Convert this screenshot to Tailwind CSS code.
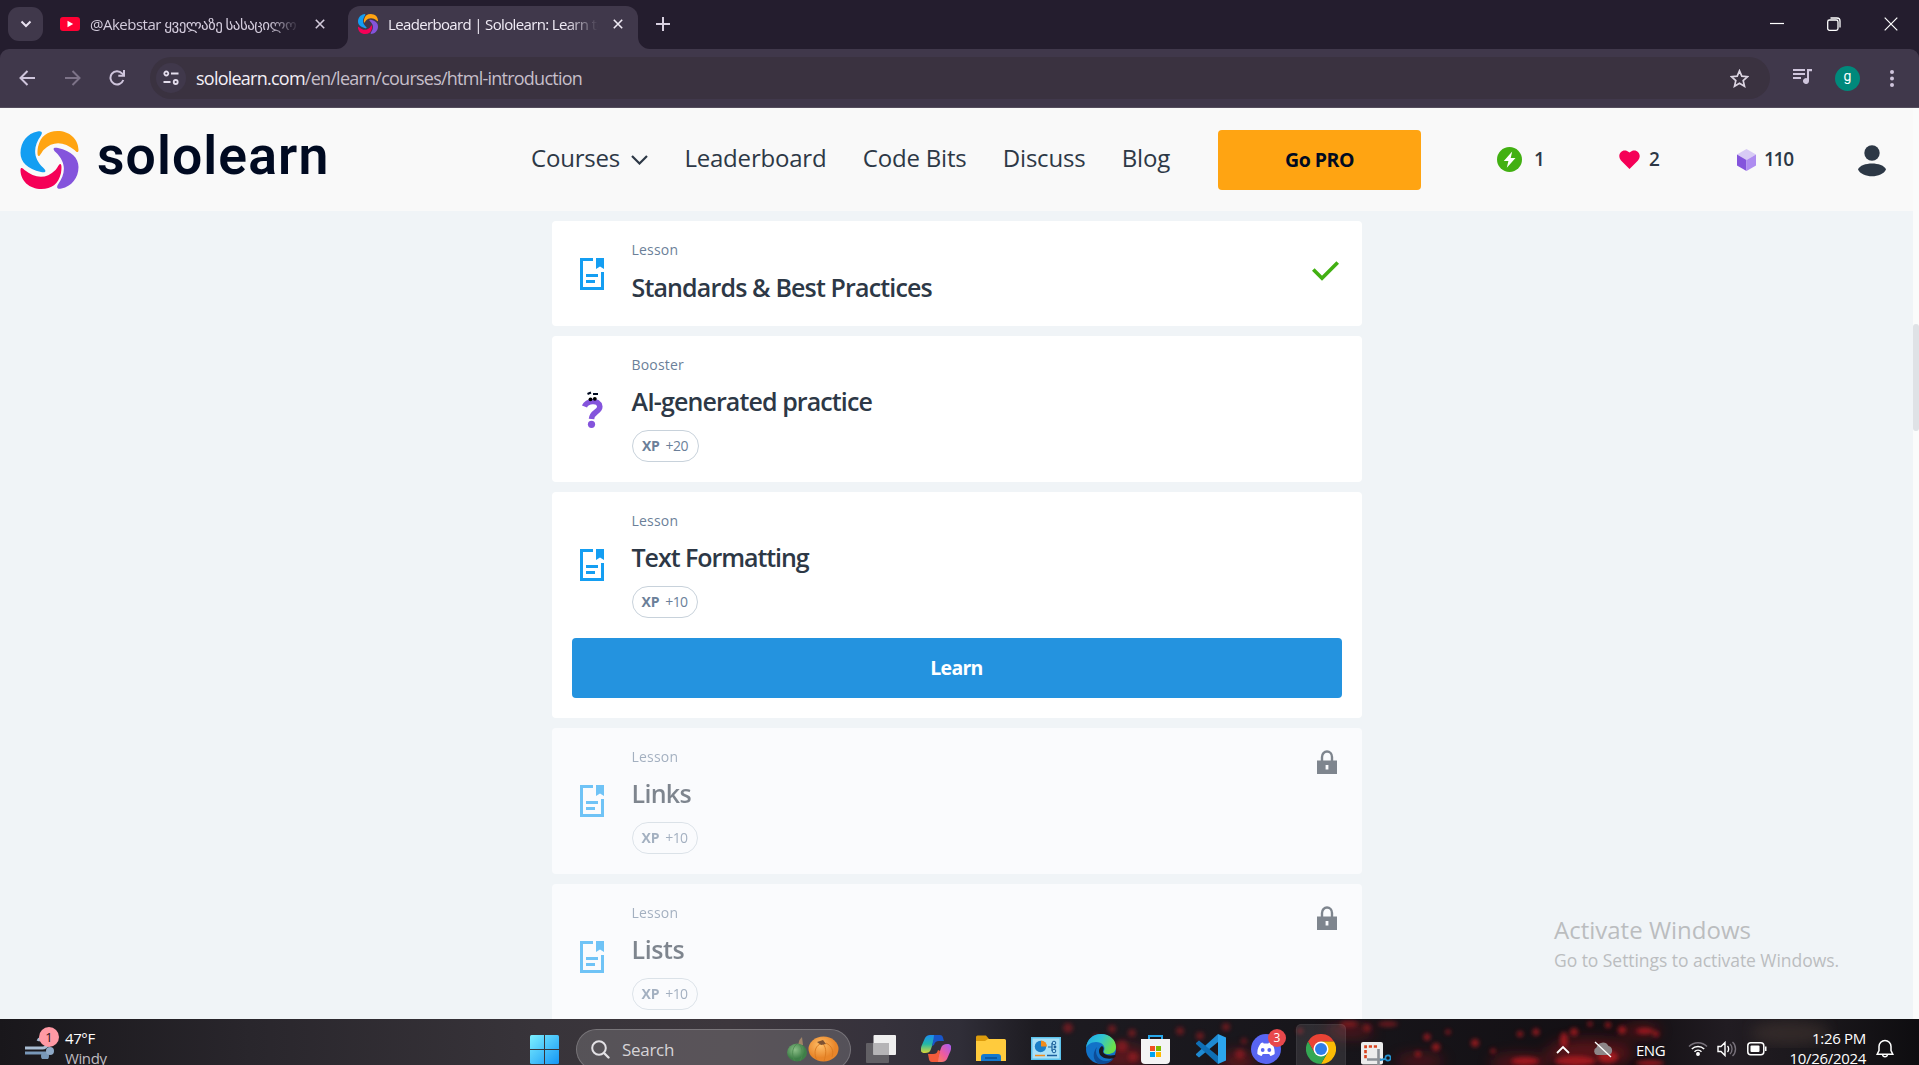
<!DOCTYPE html>
<html lang="en">
<head>
<meta charset="utf-8">
<title>Leaderboard | Sololearn: Learn to code</title>
<script src="https://cdn.jsdelivr.net/npm/@tailwindcss/browser@4"></script>
</head>
<body class="h-[1065px] w-[1919px] overflow-hidden bg-[#f0f4f7] font-['Open_Sans','DejaVu_Sans',sans-serif] text-[#2d3846]">
<!-- Shared symbols -->
<svg class="hidden">
  <symbol id="logo" viewBox="0 0 58 58">
    <path fill="#149ef2" d="M17 .6C21-.6 22.500 1.500 20.500 4.500C13 15 11.500 26 23 37C26.500 40.500 25 42 20.500 41C7 38 0 31 0 22C0 11 7 2.500 17 .6Z"/>
    <path fill="#ffa412" d="M18 25C16.500 24.500 17 19 17.500 16C20 5 27 0 37 0C49 0 58 8 58 19C58 22 56 21.500 54 19C44 11 33 9 23 19C20.500 22 19.500 25.500 18 25Z"/>
    <g transform="rotate(180 29 29)">
      <path fill="#8454dc" d="M17 .6C21-.6 22.500 1.500 20.500 4.500C13 15 11.500 26 23 37C26.500 40.500 25 42 20.500 41C7 38 0 31 0 22C0 11 7 2.500 17 .6Z"/>
      <path fill="#f50057" d="M18 25C16.500 24.500 17 19 17.500 16C20 5 27 0 37 0C49 0 58 8 58 19C58 22 56 21.500 54 19C44 11 33 9 23 19C20.500 22 19.500 25.500 18 25Z"/>
    </g>
  </symbol>
  <symbol id="lesson" viewBox="0 0 24 32">
    <path fill="none" stroke="#149ef2" stroke-width="3" d="M13 1.500H1.500V30.500H22.500V14"/>
    <path fill="#149ef2" d="M16 0h8v11l-4-2.500L16 11zM6 16h12v3H6zM6 22h9v3H6z"/>
  </symbol>
  <symbol id="lock" viewBox="0 0 20 25">
    <path fill="none" stroke="#2d3846" stroke-width="2.400" d="M5 11V7a5 5.500 0 0 1 10 0v4"/>
    <path fill="#2d3846" fill-rule="evenodd" d="M0 10.500h20V24H0zM8.600 15v4.500h2.800V15z"/>
  </symbol>
  <symbol id="close" viewBox="0 0 10 10"><path fill="none" stroke="currentColor" stroke-width="1.600" d="M.8.8l8.400 8.400M9.200.8L.8 9.200"/></symbol>
</svg>

<div class="flex h-full flex-col">
  <!-- Tab strip -->
  <div class="flex h-[49px] shrink-0 items-start bg-[#241d2e] text-[15px] text-[#d3cbdc]">
    <div class="mt-[7px] ml-2 flex h-[34px] w-[35px] items-center justify-center rounded-[11px] bg-[#40384b]">
      <svg class="h-2 w-3" viewBox="0 0 12 8"><path fill="none" stroke="#e9e2f0" stroke-width="2" d="M1.500 1.500L6 6l4.500-4.500"/></svg>
    </div>
    <div class="ml-[17px] flex h-[48px] w-[288px] items-center">
      <svg class="h-[14px] w-5" viewBox="0 0 20 14"><rect width="20" height="14" rx="3" fill="#ff0033"/><path fill="#fff" d="M7.500 3.800v6.400L13.200 7z"/></svg>
      <div class="ml-[10px] w-[210px] overflow-hidden whitespace-nowrap text-[15px] tracking-[-0.500px] [mask-image:linear-gradient(90deg,#000_85%,transparent)]">@Akebstar <span class="tracking-[-0.550px]">ყველაზე სასაცილო</span></div>
      <svg class="ml-[15px] size-[10px]"><use href="#close"/></svg>
    </div>
    <div class="relative mt-[6px] flex h-[43px] w-[290px] items-center rounded-t-[12px] bg-[#40384b] pb-[7px] text-[#f0ebf5]">
      <svg class="absolute bottom-0 -left-[12px] size-3" viewBox="0 0 12 12"><path fill="#40384b" d="M12 0v12H0A12 12 0 0 0 12 0z"/></svg>
      <svg class="absolute -right-[12px] bottom-0 size-3" viewBox="0 0 12 12"><path fill="#40384b" d="M0 0v12h12A12 12 0 0 1 0 0z"/></svg>
      <svg class="ml-[10px] size-5"><use href="#logo"/></svg>
      <div class="ml-[10px] w-[210px] overflow-hidden whitespace-nowrap text-[15px] tracking-[-0.650px] [mask-image:linear-gradient(90deg,#000_85%,transparent)]">Leaderboard | Sololearn: Learn to code</div>
      <svg class="ml-[15px] size-[10px]"><use href="#close"/></svg>
    </div>
    <svg class="mt-[17px] ml-[18px] size-[14px]" viewBox="0 0 14 14"><path stroke="#d8d0e0" stroke-width="2" d="M7 0v14M0 7h14"/></svg>
    <div class="mt-[17px] mr-[21px] ml-auto flex items-center gap-[43px] text-white">
      <svg class="h-[14px] w-[14px]" viewBox="0 0 14 14"><path stroke="#fff" stroke-width="1.200" d="M0 6.500h14"/></svg>
      <svg class="h-[14px] w-[14px]" viewBox="0 0 14 14"><path fill="none" stroke="#fff" stroke-width="1.300" d="M3.500 1h6.500a3 3 0 0 1 3 3v6.500"/><rect x=".7" y="3" width="10.300" height="10.300" rx="1.800" fill="none" stroke="#fff" stroke-width="1.300"/></svg>
      <svg class="h-[14px] w-[14px]" viewBox="0 0 14 14"><path stroke="#fff" stroke-width="1.200" d="M.7.7l12.600 12.600M13.300.7L.7 13.300"/></svg>
    </div>
  </div>

  <!-- Toolbar -->
  <div class="h-[59px] shrink-0 bg-[#241d2e]">
    <div class="flex h-full items-center rounded-t-[9px] border-b border-[#544d5d] bg-[#40384b] pl-5">
      <svg class="-ml-px size-4" viewBox="0 0 16 16"><path fill="none" stroke="#cfc5dc" stroke-width="2" d="M16 8H2M8.500 1L1.500 8l7 7"/></svg>
      <svg class="ml-[30px] size-4" viewBox="0 0 16 16"><path fill="none" stroke="#7d7388" stroke-width="2" d="M0 8h14M7.500 1l7 7-7 7"/></svg>
      <svg class="ml-[28px] size-4" viewBox="0 0 16 16"><path fill="none" stroke="#cfc5dc" stroke-width="2" d="M14.300 10A6.600 6.600 0 1 1 13 3.400l2 2"/><path fill="#cfc5dc" d="M16 0v6.700H9.300V4.800H14V0z"/></svg>
      <div class="ml-[25px] flex h-[42px] w-[1620px] items-center rounded-full bg-[#3a3240] pl-[6px]">
        <div class="flex size-[30px] items-center justify-center rounded-full bg-[#40384b]">
          <svg class="size-4" viewBox="0 0 16 16" fill="none" stroke="#e4dded" stroke-width="1.800"><circle cx="3.300" cy="3.500" r="2"/><path d="M8 3.500h7.500M.5 12h7"/><circle cx="12.700" cy="12" r="2"/></svg>
        </div>
        <div class="ml-[10px] text-[18px] tracking-[-0.760px] whitespace-nowrap text-[#c6bfca]"><span class="text-[#f3eff6]">sololearn.com</span>/en/learn/courses/html-introduction</div>
        <svg class="mr-[21px] ml-auto size-[19px]" viewBox="0 0 19 19"><path fill="none" stroke="#dcd5e2" stroke-width="1.700" d="M9.500 1.800l2.300 5.400 5.800.5-4.400 3.900 1.300 5.700-5-3-5 3 1.300-5.700L1.400 7.700l5.800-.5z"/></svg>
      </div>
      <svg class="mb-[3px] ml-[23px] h-[15px] w-[19px]" viewBox="0 0 19 15"><path fill="#cfc5dc" d="M0 0h12v2H0zM0 4h12v2H0zM0 8h8v2H0zM14 0h5v2.200h-3V12a3 3 0 1 1-2-2.800z"/></svg>
      <div class="ml-[23px] flex size-[25px] items-center justify-center rounded-full bg-[#00897b] pb-[3px] font-['Roboto',sans-serif] text-[14px] text-white">g</div>
      <svg class="ml-[30px] h-[17px] w-1" viewBox="0 0 4 17" fill="#cfc5dc"><circle cx="2" cy="2" r="2"/><circle cx="2" cy="8.500" r="2"/><circle cx="2" cy="15" r="2"/></svg>
    </div>
  </div>

  <!-- Page viewport -->
  <div class="flex min-h-0 grow">
    <div class="flex w-[1913px] flex-col">
      <header class="flex h-[103px] shrink-0 items-center bg-[#f9f9f9] pl-5">
        <svg class="h-[58px] w-[59px]"><use href="#logo"/></svg>
        <div class="-mt-[8px] ml-[18px] w-[232px] font-['Roboto',sans-serif] text-[53.500px] leading-[60px] font-semibold tracking-[1.100px] text-[#000a21]">sololearn</div>
        <nav class="-mt-[3px] ml-[202px] flex w-[639px] justify-between text-[24px] leading-8 tracking-[-0.200px] whitespace-nowrap">
          <div class="flex items-center">Courses<svg class="mt-1 ml-[11px] h-[10px] w-[17px]" viewBox="0 0 17 10"><path fill="none" stroke="#2d3846" stroke-width="2.200" d="M1 1l7.500 7.500L16 1"/></svg></div>
          <div>Leaderboard</div><div>Code Bits</div><div>Discuss</div><div>Blog</div>
        </nav>
        <div class="ml-[48px] flex h-[60px] w-[203px] items-center justify-center rounded bg-[#ffa412] text-[19.500px] font-bold tracking-[-0.500px] text-[#000a21]">Go PRO</div>
        <div class="flex items-center text-[19px] font-semibold">
          <svg class="ml-[76px] size-[25px]" viewBox="0 0 25 25"><circle cx="12.500" cy="12.500" r="12.500" fill="#42b012"/><path fill="#fff" d="M15.200 4.500L6.800 14h4.600l-1.600 6.800L18.500 11h-4.800z"/></svg>
          <span class="ml-3 w-[85px]">1</span>
          <svg class="h-[19px] w-[21px]" viewBox="0 0 21 19"><path fill="#f50057" d="M10.500 19L2 10.500C-3 4.500 4-3.500 10.500 2.500C17-3.500 24 4.500 19 10.500z"/></svg>
          <span class="ml-[9px] w-[88px]">2</span>
          <svg class="h-[22px] w-[19px]" viewBox="0 0 20 22" preserveAspectRatio="none"><path fill="#d8cbf5" d="M10 0l10 5.500L10 11 0 5.500z"/><path fill="#8454dc" d="M0 5.500L10 11v11L0 16.500z"/><path fill="#ae8cf0" d="M20 5.500L10 11v11l10-5.500z"/></svg>
          <span class="ml-[8px] w-[94px] tracking-[-1.300px]">110</span>
          <svg class="mt-[3px] h-8 w-7" viewBox="0 0 28 32"><ellipse cx="14" cy="8" rx="7.700" ry="7.700" fill="#2d3846"/><path fill="#2d3846" d="M0 24.500C3 16.500 25 16.500 28 24.500C24 33.500 4 33.500 0 24.500z"/></svg>
        </div>
      </header>

      <main class="mx-auto mt-[10px] flex min-h-0 w-[810px] grow flex-col gap-[10px] overflow-hidden [&>*]:shrink-0">
        <section class="flex h-[105px] rounded bg-white p-5">
          <svg class="mt-[17px] ml-2 h-8 w-6"><use href="#lesson"/></svg>
          <div class="ml-7">
            <div class="text-[14px] leading-[17px] tracking-[0.200px] text-[#6b7f99]">Lesson</div>
            <div class="mt-[12px] text-[25px] leading-[34px] font-semibold tracking-[-0.850px] whitespace-nowrap">Standards &amp; Best Practices</div>
          </div>
          <svg class="mt-5 mr-[3px] ml-auto h-5 w-[27px]" viewBox="0 0 27 20"><path fill="none" stroke="#42b012" stroke-width="3.700" d="M1.300 8.500L10 17.200 25.700 1.500"/></svg>
        </section>

        <section class="flex h-[146px] rounded bg-white p-5">
          <svg class="mt-[35px] ml-[10px] h-[37px] w-[22px]" viewBox="0 0 22 37"><path fill="none" stroke="#8454dc" stroke-width="5.500" d="M2.500 15.500C5 9.500 17 8.500 17.800 15.500C18 21 10 20.500 9.500 28"/><circle cx="9.500" cy="33.300" r="3.600" fill="#8454dc"/><path stroke="#000a21" stroke-width="2" d="M5.500 3l3.500-1.500M11 3h5"/><circle cx="8.500" cy="8.300" r="1.900"/><circle cx="12.800" cy="7.800" r="1.900"/></svg>
          <div class="ml-[28px]">
            <div class="text-[14px] leading-[17px] tracking-[0.200px] text-[#6b7f99]">Booster</div>
            <div class="mt-[12px] text-[25px] leading-[32px] font-semibold tracking-[-0.900px] whitespace-nowrap">AI-generated practice</div>
            <div class="mt-[13px] flex h-8 w-[67px] items-center justify-center gap-[6px] rounded-full border border-[#c8d2db] pb-[2px] text-[14px] tracking-[-0.500px] text-[#6b7f99]"><b class="tracking-[-0.200px]">XP</b><span>+20</span></div>
          </div>
        </section>

        <section class="h-[226px] rounded bg-white p-5">
          <div class="flex">
            <svg class="mt-[37px] ml-2 h-8 w-6"><use href="#lesson"/></svg>
            <div class="ml-7">
              <div class="text-[14px] leading-[17px] tracking-[0.200px] text-[#6b7f99]">Lesson</div>
              <div class="mt-[12px] text-[25px] leading-[32px] font-semibold tracking-[-1.050px] whitespace-nowrap">Text Formatting</div>
              <div class="mt-[13px] flex h-8 w-[66px] items-center justify-center gap-[6px] rounded-full border border-[#c8d2db] pb-[2px] text-[14px] tracking-[-0.600px] text-[#6b7f99]"><b class="tracking-[-0.200px]">XP</b><span>+10</span></div>
            </div>
          </div>
          <div class="mt-5 flex h-[60px] items-center justify-center rounded bg-[#2493df] text-[19.500px] font-bold tracking-[-0.700px] text-white">Learn</div>
        </section>

        <section class="flex h-[146px] rounded bg-[#fafbfd] p-5">
          <svg class="mt-[37px] ml-2 h-8 w-6 opacity-60"><use href="#lesson"/></svg>
          <div class="ml-7 opacity-60">
            <div class="text-[14px] leading-[17px] tracking-[0.200px] text-[#6b7f99]">Lesson</div>
            <div class="mt-[12px] text-[25px] leading-[32px] font-semibold tracking-[-0.700px] whitespace-nowrap">Links</div>
            <div class="mt-[13px] flex h-8 w-[66px] items-center justify-center gap-[6px] rounded-full border border-[#c8d2db] pb-[2px] text-[14px] tracking-[-0.600px] text-[#6b7f99]"><b class="tracking-[-0.200px]">XP</b><span>+10</span></div>
          </div>
          <svg class="mt-[2px] mr-[5px] ml-auto h-[25px] w-5 opacity-60"><use href="#lock"/></svg>
        </section>

        <section class="flex h-[146px] rounded bg-[#fafbfd] p-5">
          <svg class="mt-[37px] ml-2 h-8 w-6 opacity-60"><use href="#lesson"/></svg>
          <div class="ml-7 opacity-60">
            <div class="text-[14px] leading-[17px] tracking-[0.200px] text-[#6b7f99]">Lesson</div>
            <div class="mt-[12px] text-[25px] leading-[32px] font-semibold tracking-[-0.400px] whitespace-nowrap">Lists</div>
            <div class="mt-[13px] flex h-8 w-[66px] items-center justify-center gap-[6px] rounded-full border border-[#c8d2db] pb-[2px] text-[14px] tracking-[-0.600px] text-[#6b7f99]"><b class="tracking-[-0.200px]">XP</b><span>+10</span></div>
          </div>
          <svg class="mt-[2px] mr-[5px] ml-auto h-[25px] w-5 opacity-60"><use href="#lock"/></svg>
        </section>
      </main>
    </div>
    <!-- Scrollbar -->
    <div class="w-[6px] bg-[#fafbfb] pt-[216px]"><div class="h-[107px] rounded-[3px] bg-[#dfe2e6]"></div></div>
  </div>

  <!-- Taskbar -->
  <div class="relative flex h-[46px] shrink-0 items-start overflow-hidden bg-[linear-gradient(90deg,#19171b_0%,#29262c_13%,#38343a_28%,#3d373d_38%,#36323c_46%,#302e38_50%,#1d1b21_54%,#17151a_70%,#130f13_85%,#211c22_90%,#1a171b_95%,#0e0d10_100%)]">
    <!-- Wallpaper embers -->
    <svg class="absolute inset-0 h-full w-full" viewBox="0 0 1919 46">
      <defs><filter id="soft"><feGaussianBlur stdDeviation="2"/></filter><filter id="softer"><feGaussianBlur stdDeviation="7"/></filter></defs>
      <g filter="url(#softer)" fill="#8e131b" opacity=".55"><ellipse cx="1122" cy="38" rx="26" ry="12"/><ellipse cx="1238" cy="42" rx="18" ry="10"/><ellipse cx="1350" cy="12" rx="24" ry="6"/><ellipse cx="1420" cy="42" rx="24" ry="6"/><ellipse cx="1520" cy="44" rx="30" ry="8"/><ellipse cx="1590" cy="34" rx="44" ry="14"/><ellipse cx="1640" cy="12" rx="20" ry="6"/></g>
      <g filter="url(#soft)" fill="#b31a22" opacity=".5"><circle cx="1068" cy="9" r="5"/><circle cx="1112" cy="10" r="4"/><circle cx="1096" cy="18" r="3"/><circle cx="1132" cy="14" r="4"/><circle cx="1160" cy="26" r="4"/><circle cx="1122" cy="27" r="6"/><circle cx="1133" cy="38" r="5"/><circle cx="1180" cy="12" r="4"/><circle cx="1200" cy="17" r="4"/><circle cx="1226" cy="8" r="4"/><circle cx="1244" cy="22" r="3"/><circle cx="1240" cy="35" r="5"/><circle cx="1300" cy="12" r="3"/><ellipse cx="1349" cy="5" rx="9" ry="3.500"/><circle cx="1367" cy="9" r="4"/><ellipse cx="1388" cy="5" rx="10" ry="3"/></g>
      <g filter="url(#soft)" fill="#c21c24" opacity=".7"><circle cx="1427" cy="18" r="3.500"/><circle cx="1448" cy="13" r="2.500"/><circle cx="1436" cy="28" r="4"/><circle cx="1418" cy="35" r="3"/><circle cx="1475" cy="24" r="4"/><circle cx="1493" cy="32" r="2.500"/><circle cx="1520" cy="15" r="3"/><circle cx="1536" cy="13" r="3.500"/><ellipse cx="1564" cy="21" rx="4" ry="8"/><circle cx="1574" cy="13" r="4"/><circle cx="1590" cy="5" r="2.500"/><circle cx="1608" cy="6" r="3"/><circle cx="1622" cy="11" r="4"/><ellipse cx="1645" cy="12" rx="9" ry="3"/><circle cx="1656" cy="15" r="3"/><ellipse cx="1525" cy="42" rx="14" ry="4"/><ellipse cx="1575" cy="42" rx="20" ry="5"/><ellipse cx="1608" cy="38" rx="10" ry="6"/><ellipse cx="1650" cy="44" rx="14" ry="3"/></g>
      <ellipse cx="1790" cy="14" rx="40" ry="12" fill="#4a3b34" opacity=".5" filter="url(#softer)"/>
    </svg>
    <div class="relative flex w-full items-start text-white">
      <svg class="mt-[8px] ml-[25px] h-8 w-[34px]" viewBox="0 0 34 32"><path fill="none" stroke="#a9bdd3" stroke-width="3" d="M0 21h17a5 5 0 1 0-4-7"/><path fill="none" stroke="#7897b8" stroke-width="3" d="M0 26h22"/><circle cx="20" cy="29" r="4" fill="#7897b8"/><circle cx="25" cy="24" r="4" fill="#8fa9c6"/><circle cx="24" cy="10" r="10" fill="#ff99a4"/><text x="24" y="15" text-anchor="middle" font-size="13" font-family="Open Sans" fill="#2b1215">1</text></svg>
      <div class="mt-[9px] ml-[6px] w-[465px] text-[15px] leading-5 tracking-[-0.400px]"><div>47°F</div><div class="text-[#c0bdc1]">Windy</div></div>
      <svg class="mt-4 size-[29px]" viewBox="0 0 29 29"><defs><linearGradient id="win" x1="0" y1="0" x2="1" y2="1" gradientUnits="objectBoundingBox"><stop stop-color="#7df0ff"/><stop offset="1" stop-color="#1496f5"/></linearGradient><mask id="wm"><path fill="#fff" d="M0 0h14v14H0zM15 0h14v14H15zM0 15h14v14H0zM15 15h14v14H15z"/></mask></defs><rect width="29" height="29" rx="1.500" fill="url(#win)" mask="url(#wm)"/></svg>
      <div class="mt-[10px] ml-[17px] flex h-[41px] w-[275px] items-center rounded-full border border-white/20 bg-white/15 pl-[14px]">
        <svg class="mb-[1px] size-[19px]" viewBox="0 0 19 19"><circle cx="8" cy="8" r="6.800" fill="none" stroke="#e3e1e5" stroke-width="2"/><path stroke="#e3e1e5" stroke-width="2.400" stroke-linecap="round" d="M13 13l4.500 4.500"/></svg>
        <span class="ml-3 text-[17px] tracking-[-0.300px] text-[#d6d3d7]">Search</span>
        <svg class="mr-[11px] mb-px ml-auto h-[26px] w-[52px]" viewBox="0 0 52 26"><defs><radialGradient id="gp" cx=".4" cy=".35"><stop stop-color="#8cc088"/><stop offset="1" stop-color="#3f7f48"/></radialGradient><radialGradient id="op" cx=".4" cy=".35"><stop stop-color="#ffc06a"/><stop offset="1" stop-color="#e8862a"/></radialGradient></defs><path fill="#a08468" d="M11 9l1.500-5L15 1l1 8z"/><ellipse cx="10" cy="16.500" rx="10" ry="9" fill="url(#gp)"/><path fill="none" stroke="#4c8a50" stroke-width=".8" d="M10 8C4 12 5 21 8 25M12 8c4 4 4 12 1 17"/><ellipse cx="36.500" cy="13" rx="15" ry="12.500" fill="url(#op)"/><path fill="none" stroke="#d9791f" stroke-width=".9" d="M33 8c-6 3-6 11-3 16M36 8c4 4 3 11 1 17M39 7c6 3 8 8 6 14"/><path fill="#7d5232" d="M30 6l6-2 3 4-5 1z"/></svg>
      </div>
      <div class="mt-[15px] ml-[15px] flex items-start gap-[25px]">
        <svg class="mt-[1px] h-7 w-[30px]" viewBox="0 0 30 28"><rect y="8" width="23" height="20" rx="1" fill="#626065"/><rect x="7.500" width="22.500" height="20" rx="1" fill="#efefef"/><path fill="#b5b4b6" d="M7.500 8H23v12H7.500z"/></svg>
        <svg class="mt-[1px] h-[27px] w-[30px]" viewBox="0 0 30 27"><defs><linearGradient id="cpa" x1="0" y1="0" x2="0" y2="1"><stop stop-color="#1d8df2"/><stop offset=".5" stop-color="#22b7a6"/><stop offset="1" stop-color="#d8d837"/></linearGradient><linearGradient id="cpb" x1="1" y1="0" x2="0" y2="1"><stop stop-color="#a35cf5"/><stop offset=".5" stop-color="#ed5ba0"/><stop offset="1" stop-color="#ff8a45"/></linearGradient></defs><path fill="url(#cpa)" d="M9 0h8c-3 1-4 4-5 8l-2 6c-1 3-3 4-6 4-4 0-5-2-3.500-7L4 3c1-2 3-3 5-3z"/><path fill="#1956c9" d="M13 0h6c3 0 3 3 4 6h-5c-3 0-4 1-5 4l-2 1c1-5 2-9 2-11z"/><path fill="url(#cpb)" d="M21 27h-8c3-1 4-4 5-8l2-6c1-3 3-4 6-4 4 0 5 2 3.500 7L26 24c-1 2-3 3-5 3z"/><path fill="#f25b3b" d="M17 27h-6c-3 0-3-3-4-8h5c3 0 4-1 5-4l2 1c-1 5-2 9-2 11z"/></svg>
        <svg class="mt-[1px] h-7 w-[30px]" viewBox="0 0 30 28"><path fill="#dc9b0c" d="M0 2a1.500 1.500 0 0 1 1.500-1.500H10l3 3.500h5v6H0z"/><path fill="#ffcb3d" d="M0 6h9l3-2h16.500A1.500 1.500 0 0 1 30 5.500V26H0z"/><path fill="#1379cf" d="M5 26v-4a3 3 0 0 1 3-3h14a3 3 0 0 1 3 3v4z"/><path stroke="#0a4f93" stroke-width="1.500" d="M9 23h12"/></svg>
        <svg class="mt-[3px] h-[23px] w-[30px]" viewBox="0 0 30 23"><rect width="30" height="23" fill="#5cc3ec"/><rect x="1.500" y="1.500" width="27" height="20" fill="#a9e0f7"/><circle cx="9.500" cy="9.500" r="5.700" fill="#1b7fc8"/><path fill="#f28c1c" d="M10 3.500v6h6a6 6 0 0 0-6-6z"/><path fill="none" stroke="#1b5f9c" stroke-width="1.200" d="M17 10h4M21 6v8"/><circle cx="23" cy="6" r="1.800" fill="none" stroke="#1b5f9c"/><circle cx="23" cy="14" r="1.800" fill="none" stroke="#1b5f9c"/><circle cx="24" cy="10" r="1.400" fill="#1b5f9c"/><path stroke="#f28c1c" stroke-width="1.500" d="M4 18.500h10"/><path stroke="#1b5f9c" stroke-width="1.500" d="M16 18.500h10"/></svg>
        <svg class="size-[30px]" viewBox="0 0 30 30"><defs><linearGradient id="eg" x1="0" y1="0" x2="1" y2=".4"><stop stop-color="#1fa4e8"/><stop offset=".5" stop-color="#2fc3d5"/><stop offset="1" stop-color="#6be04c"/></linearGradient></defs><circle cx="15" cy="15" r="15" fill="#1272c8"/><path fill="url(#eg)" d="M0 14C1 5 7 0 15 0c9 0 15 6 15 13 0 5-4 7-8 7-3 0-5-1-4-3 2-5-2-9-8-9-5 0-9 3-10 6z"/><path fill="#0d4c97" d="M11 13c-3 6 1 14 9 14 4 0 6-1 8-3-3 5-8 6-13 6C8 30 5 20 11 13z"/><path fill="#1c1920" d="M16 12c3 2 1 4 1 6 1 3 6 4 12 3l1 1-2 2c-6 2-15 0-15-7 0-2 1-4 3-5z"/></svg>
        <svg class="size-[30px]" viewBox="0 0 30 30"><path fill="none" stroke="#28a8ea" stroke-width="2" d="M8 8V2h13v6"/><path fill="#f4f4f4" d="M0 5h29v21a4 4 0 0 1-4 4H4a4 4 0 0 1-4-4z"/><path fill="#f25022" d="M9 12h5v5H9z"/><path fill="#7fba00" d="M15 12h5v5h-5z"/><path fill="#00a4ef" d="M9 18h5v5H9z"/><path fill="#ffb900" d="M15 18h5v5h-5z"/></svg>
        <svg class="size-[30px]" viewBox="0 0 30 30"><path fill="#1f8ad2" d="M22 0v8L3 23.500l-3-2.500V20z"/><path fill="#0f6fb5" d="M22 30v-8L3 6.500 0 9v1z"/><path fill="#2ca5ee" d="M22 0l8 3.500v23L22 30z"/></svg>
        <div class="relative"><svg class="size-[30px]" viewBox="0 0 30 30"><circle cx="15" cy="15" r="15" fill="#5865f2"/><path fill="#fff" d="M10 9l2-.6.7 1.200h4.600L18 8.400 20.500 9C23 12 24 16 23.600 20c-1.500 1.200-3 1.700-4.200 2l-1.200-2h-6.400l-1.200 2c-1.300-.3-2.800-.8-4.200-2C6 16 7.500 12 10 9z"/><circle cx="11.700" cy="16" r="1.900" fill="#5865f2"/><circle cx="18.300" cy="16" r="1.900" fill="#5865f2"/></svg><div class="absolute -top-[5px] left-[17px] flex size-[18px] items-center justify-center rounded-full bg-[#e8484c] text-[12px] leading-none">3</div></div>
        <div class="-mx-[10px] -mt-[10px] flex h-[50px] w-[50px] justify-center rounded-[5px] border border-white/5 bg-white/10 pt-[9px]"><svg class="size-[30px]" viewBox="0 0 30 30"><path fill="#e94335" d="M2 7.500A15 15 0 0 1 28 7.500H15L8.500 19z"/><path fill="#fbbc05" d="M28 7.500A15 15 0 0 1 15 30l6.500-11.200L15 7.500z"/><path fill="#34a853" d="M2 7.500A15 15 0 0 0 15 30l6.500-11.200H8.500z"/><circle cx="15" cy="15" r="7.500" fill="#fff"/><circle cx="15" cy="15" r="6" fill="#2f7de9"/></svg></div>
        <svg class="mt-2 h-[23px] w-[30px]" viewBox="0 0 30 23"><rect width="22" height="22.500" rx="2" fill="#ececec"/><path fill="none" stroke="#d8431f" stroke-width="2.600" stroke-dasharray="3.200 1.800" d="M16 4.500H4.500V17"/><path fill="none" stroke="#8b9096" stroke-width="2.600" d="M6 17.500h14M17.500 7v16"/><circle cx="27" cy="16" r="2.600" fill="none" stroke="#2492d1" stroke-width="1.600"/><path stroke="#2492d1" stroke-width="2" d="M19 18l5-1"/></svg>
      </div>
      <svg class="mt-[26px] ml-[165px] h-[9px] w-[14px]" viewBox="0 0 14 9"><path fill="none" stroke="#fff" stroke-width="1.800" d="M1 8l6-6 6 6"/></svg>
      <svg class="mt-[21px] ml-[23px] h-[18px] w-5" viewBox="0 0 20 18"><path fill="#8d8689" d="M4 15a4 4 0 0 1-.5-7.500A6.500 6.500 0 0 1 15.500 6 4.700 4.700 0 0 1 16 15z"/><path stroke="#fff" stroke-width="1.300" d="M2 2l16 15"/></svg>
      <div class="mt-[21px] ml-[23px] w-[52px] text-[15px] leading-5 tracking-[-0.500px]">ENG</div>
      <svg class="mt-[21px] h-4 w-5" viewBox="0 0 20 16" fill="none" stroke="#fff" stroke-width="1.500"><path stroke="#77717a" d="M1 6.500a12.700 12.700 0 0 1 18 0"/><path d="M3.800 9a8.700 8.700 0 0 1 12.400 0M6.500 11.700a5 5 0 0 1 7 0"/><circle cx="10" cy="14" r="1.200" fill="#fff"/></svg>
      <svg class="mt-[22px] ml-[9px] h-4 w-5" viewBox="0 0 20 16" fill="none" stroke="#fff" stroke-width="1.400"><path d="M1 5.500h3L8 1.500v13l-4-4H1zM10.500 5c1.500 1.500 1.500 4.500 0 6"/><path stroke="#77717a" d="M13 3c2.700 2.500 2.700 7.500 0 10M15.500 1c4 3.500 4 10.500 0 14"/></svg>
      <svg class="mt-[23px] ml-[10px] h-[14px] w-5" viewBox="0 0 20 14"><rect x=".8" y=".8" width="16" height="12" rx="3" fill="none" stroke="#fff" stroke-width="1.500"/><rect x="3.500" y="3.500" width="9" height="6.600" rx="1" fill="#fff"/><path fill="#fff" d="M18 4.500h1.500v4.500H18z"/></svg>
      <div class="mt-[9px] ml-[15px] w-[84px] text-right text-[15px] leading-5 tracking-[-0.300px]"><div>1:26 PM</div><div>10/26/2024</div></div>
      <svg class="mt-[20px] ml-[10px] h-5 w-[18px]" viewBox="0 0 18 20" fill="none" stroke="#fff" stroke-width="1.500"><path d="M1.200 15.200h15.600L15 11.500V7.500a6 6 0 0 0-12 0v4zM6.500 15.500c.5 3 4.500 3 5 0"/></svg>
    </div>
  </div>
</div>

<!-- Activation watermark, floats above the page -->
<div class="absolute top-[912px] left-[1554px] whitespace-nowrap text-[#bbbdbf]">
  <div class="text-[24px] leading-9">Activate Windows</div>
  <div class="text-[17.500px] leading-6 tracking-[-0.050px]">Go to Settings to activate Windows.</div>
</div>
</body>
</html>
